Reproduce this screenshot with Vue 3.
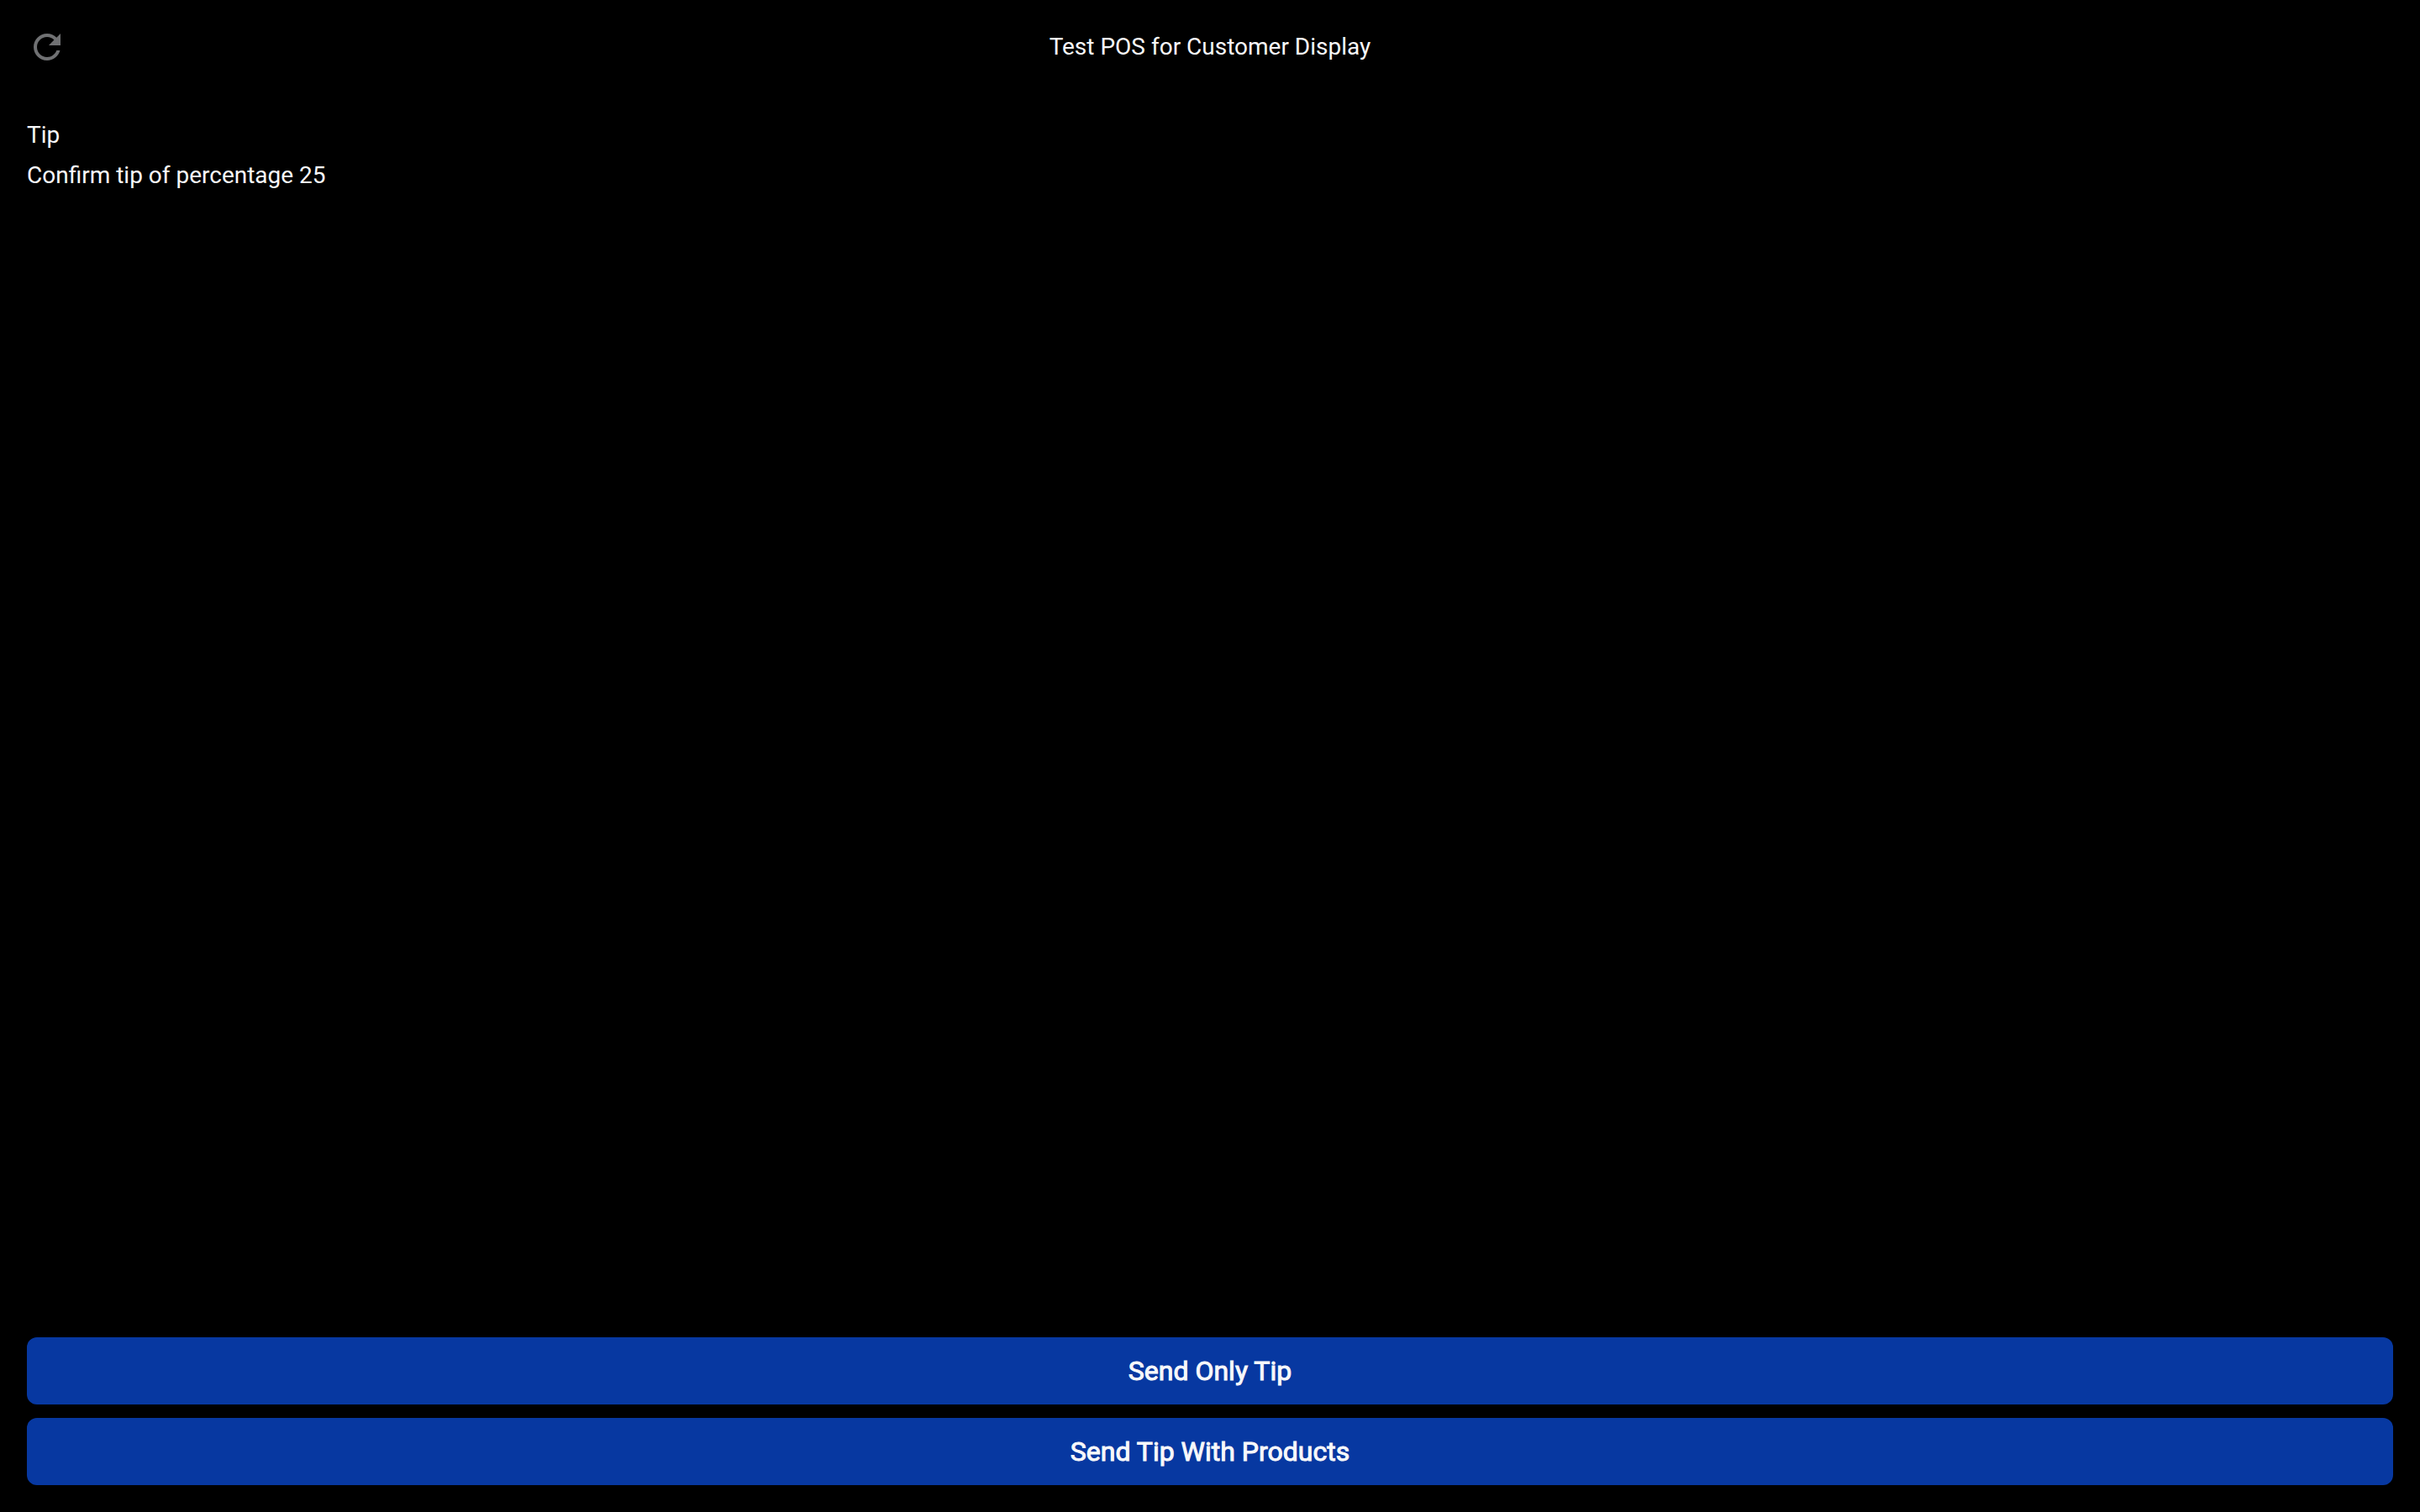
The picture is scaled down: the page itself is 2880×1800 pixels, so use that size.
<script setup>
const title = 'Test POS for Customer Display'
const percentage = 25
const actions = ['Send Only Tip', 'Send Tip With Products']
</script>

<template>
  <div class="screen">
    <header class="bar">
      <button class="refresh" type="button" aria-label="Refresh">
        <svg viewBox="0 0 24 24" aria-hidden="true">
          <path d="M17.65 6.35C16.2 4.9 14.21 4 12 4c-4.42 0-7.99 3.58-7.99 8s3.57 8 7.99 8c3.73 0 6.84-2.55 7.73-6h-2.08c-.82 2.33-3.04 4-5.65 4-3.31 0-6-2.69-6-6s2.69-6 6-6c1.66 0 3.14.69 4.22 1.78L13 11h7V4l-2.35 2.35z" />
        </svg>
      </button>
      <h1 class="title">{{ title }}</h1>
    </header>
    <main class="content">
      <h2 class="heading">Tip</h2>
      <p class="message">Confirm tip of percentage {{ percentage }}</p>
    </main>
    <footer class="actions">
      <button v-for="label in actions" :key="label" class="action" type="button">{{ label }}</button>
    </footer>
  </div>
</template>

<style>
body {
  background: #000;
}
</style>

<style scoped>
.screen {
  box-sizing: border-box;
  min-height: 100vh;
  padding: 32px;
  display: flex;
  flex-direction: column;
  background: #000;
  color: #f8f8fa;
  font-family: Roboto, sans-serif;
  font-size: 28px;
  line-height: 34px;
}
.bar {
  display: grid;
  grid-template-columns: 48px 1fr 48px;
  align-items: center;
}
.refresh {
  width: 48px;
  height: 48px;
  padding: 0;
  border: 0;
  background: none;
  color: #707173;
  cursor: pointer;
}
.refresh svg {
  display: block;
  width: 48px;
  height: 48px;
  fill: currentColor;
}
.title,
.heading,
.message {
  margin: 0;
  font-size: 28px;
  font-weight: 400;
}
.title {
  text-align: center;
}
.content {
  flex: 1;
  display: flex;
  flex-direction: column;
  gap: 14px;
  padding-top: 64px;
}
.actions {
  display: flex;
  flex-direction: column;
  gap: 16px;
}
.action {
  height: 80px;
  padding: 0 32px;
  border: 0;
  border-radius: 12px;
  background: #0738a1;
  color: #f8f8fa;
  font-family: inherit;
  font-size: 32px;
  font-weight: 400;
  -webkit-text-stroke: 1px currentColor;
  line-height: 40px;
  cursor: pointer;
}
</style>
